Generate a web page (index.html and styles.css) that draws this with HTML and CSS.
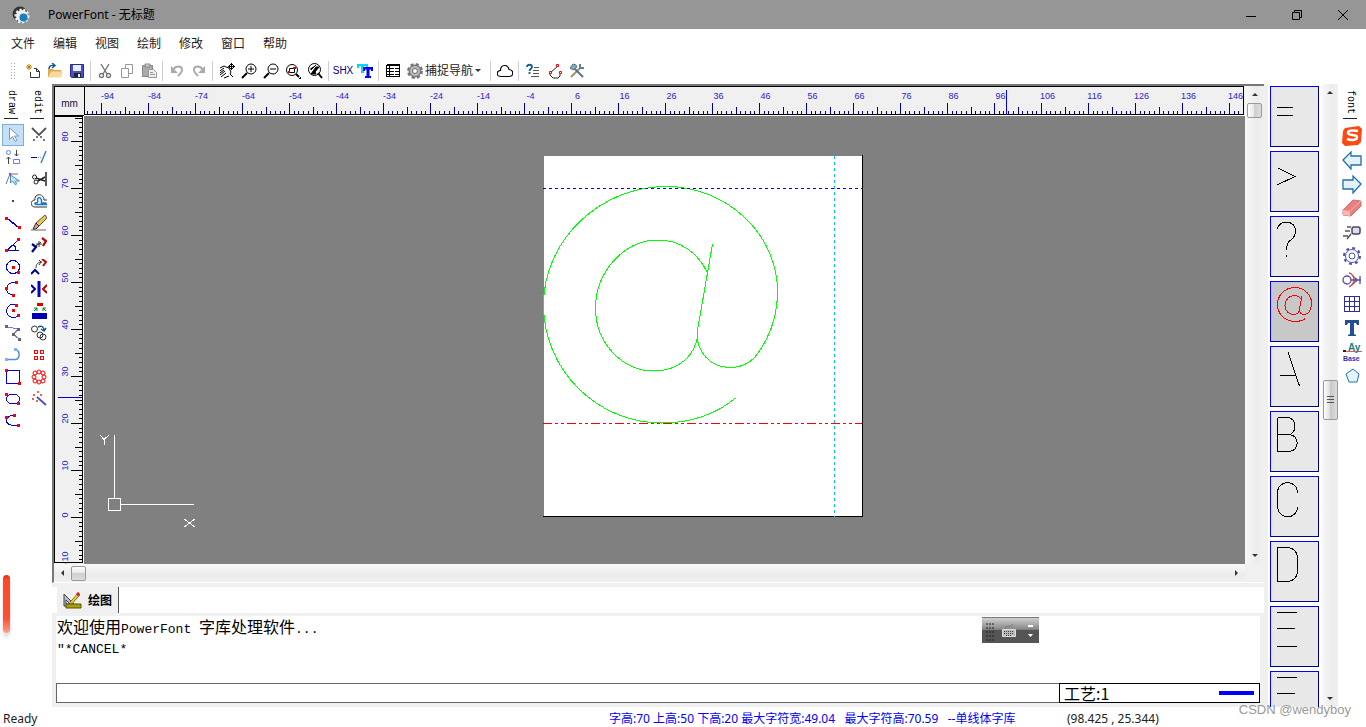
FILE: index.html
```html
<!DOCTYPE html>
<html lang="zh-CN">
<head>
<meta charset="utf-8" />
<title>PowerFont - 无标题</title>
<link rel="stylesheet" href="styles.css">
</head>
<body>
<div class="app">
	<header class="titlebar">
		<svg class="logo" width="18" height="18" viewBox="0 0 18 18"><circle cx="8" cy="8" r="7.500" fill="#333"/><circle cx="10" cy="10" r="6" fill="#eee" stroke="#eee" stroke-width="3" stroke-dasharray="2 1.600"/><circle cx="11.500" cy="11.500" r="4" fill="#1b80b8"/></svg>
		<h1>PowerFont - 无标题</h1>
		<div class="winbtns">
			<button aria-label="最小化"><svg width="12" height="12" viewBox="0 0 12 12"><path d="M1 7.500h10"/></svg></button>
			<button aria-label="还原"><svg width="12" height="12" viewBox="0 0 12 12"><path d="M1.500 3.500h7v7h-7zM3.500 3.500v-2h7v7h-2"/></svg></button>
			<button aria-label="关闭"><svg width="12" height="12" viewBox="0 0 12 12"><path d="M1 1l10 10M11 1L1 11"/></svg></button>
		</div>
	</header>
	<nav class="menu">
		<a href="#">文件</a>
		<a href="#">编辑</a>
		<a href="#">视图</a>
		<a href="#">绘制</a>
		<a href="#">修改</a>
		<a href="#">窗口</a>
		<a href="#">帮助</a>
	</nav>
	<div class="toolbar">
		<span class="grip"></span>
		<button aria-label="新建"><svg viewBox="0 0 16 16"><path d="M4 1v6M1 4h6M2 2l4 4M6 2L2 6" stroke="#c87800"/><path d="M9 5.500h2.500l3 3v6h-9V9" fill="none" stroke="#333"/><path d="M11.500 5.500v3h3" fill="none" stroke="#333"/></svg></button>
		<button aria-label="打开"><svg viewBox="0 0 16 16"><path d="M1 6h5l1 1h7v7H1z" fill="#e0a850"/><path d="M1 14.500l3-6h12l-2 6z" fill="#f8d8a0"/><path d="M2 6c0-3 2-4 5-3.500M5 0l3 2.500L5 5" fill="none" stroke="#0a5a96" stroke-width="1.500"/></svg></button>
		<button aria-label="保存"><svg viewBox="0 0 16 16"><path d="M1.500 1.500h13v13h-12l-1-1z" fill="#4850c8" stroke="#282890"/><path d="M4 2h8v6H4z" fill="#e8f0fa"/><path d="M5 10h7v4H5z" fill="#222"/><path d="M9 11h2v3H9z" fill="#eee"/></svg></button>
		<i class="sep"></i>
		<button aria-label="剪切"><svg viewBox="0 0 16 16" fill="none" stroke="#777" stroke-width="1.400"><path d="M4 1l6 10M12 1L6 11"/><circle cx="4.500" cy="12.500" r="2"/><circle cx="11.500" cy="12.500" r="2"/></svg></button>
		<button aria-label="复制"><svg viewBox="0 0 16 16" fill="#fff" stroke="#999"><path d="M6.500 1.500h7v9h-7z"/><path d="M2.500 5.500h7v9h-7z"/></svg></button>
		<button aria-label="粘贴"><svg viewBox="0 0 16 16"><path d="M1.500 2.500h10v11h-10z" fill="#aaa" stroke="#888"/><path d="M4 1h5v3H4z" fill="#ccc" stroke="#888"/><path d="M7.500 6.500h5l3 3v5h-8z" fill="#eee" stroke="#999"/><path d="M9 9.500h3M9 11.500h5" stroke="#999"/></svg></button>
		<i class="sep"></i>
		<button aria-label="撤销"><svg viewBox="0 0 16 16"><path d="M4 7c2-4 8-5 9-1 .5 3-2 5-4 7" fill="none" stroke="#aaa" stroke-width="2"/><path d="M2 3v7h7z" fill="#aaa"/></svg></button>
		<button aria-label="重做"><svg viewBox="0 0 16 16"><path d="M12 7C10 3 4 2 3 6c-.5 3 2 5 4 7" fill="none" stroke="#aaa" stroke-width="2"/><path d="M14 3v7H7z" fill="#aaa"/></svg></button>
		<i class="sep"></i>
		<button aria-label="平移"><svg viewBox="0 0 16 16" fill="none" stroke="#000"><path d="M1 5l4-2 2 1 3 1 2 4-1 2 3 3M1 8l4-3M1 10l4-3M1 12l5-4M2 14l5-4M5 15l5-2"/><path d="M9 3.500h7M12.500 0v7M11 1.500h3M14.500 2v3M10.500 2v3M11 5.500h3"/></svg></button>
		<button aria-label="放大"><svg viewBox="0 0 16 16" fill="none" stroke="#000"><circle cx="10" cy="6" r="5"/><path d="M7 6h6M10 3v6"/><path d="M6 10l-5 5" stroke-width="2"/></svg></button>
		<button aria-label="缩小"><svg viewBox="0 0 16 16" fill="none" stroke="#000"><circle cx="10" cy="6" r="5"/><path d="M7 6h6"/><path d="M6 10l-5 5" stroke-width="2"/></svg></button>
		<button aria-label="窗口缩放"><svg viewBox="0 0 16 16" fill="none" stroke="#000"><circle cx="7" cy="7" r="5.500"/><path d="M4.500 5.500h5v4h-5z"/><path d="M11 11l3 3" stroke-width="2"/><path d="M3 9h2M8 5h3" stroke="#c00" stroke-width="2"/><path d="M14 16h2v-2z" fill="#000"/></svg></button>
		<button aria-label="上一视图"><svg viewBox="0 0 16 16" fill="none" stroke="#000"><circle cx="7.500" cy="6.500" r="6"/><path d="M9 2L4 7V5M4 11h5l-1-2 4-5H9z" fill="#000"/><path d="M11 10l4 5" stroke-width="2"/></svg></button>
		<i class="sep"></i>
		<button class="shx">SHX</button>
		<button aria-label="字体"><svg viewBox="0 0 16 16"><path d="M0 1h11v4H9V3H7v7H4V3H2v2H0z" fill="#00d8f8"/><path d="M6 4h10v4h-2V6.500h-1.500V13H14v2H8v-2h1.500V6.500H8V8H6z" fill="#0000ff"/></svg></button>
		<i class="sep"></i>
		<button aria-label="列表"><svg viewBox="0 0 16 16" class="px" fill="none" stroke="#000"><path d="M1.500 2.500h13v11h-13zM4.500 2v12M2 5.500h12M2 8.500h12M2 11.500h12M2 1.500h13"/><path d="M9.500 3v10" stroke="#fff"/></svg></button>
		<button class="snap"><svg viewBox="0 0 16 16"><circle cx="8" cy="8" r="6.500" fill="#888" stroke="#777" stroke-width="3" stroke-dasharray="3 2.100"/><circle cx="8" cy="8" r="5.500" fill="#bbb" stroke="#777"/><circle cx="8" cy="8" r="2.500" fill="#fff" stroke="#666"/></svg><span>捕捉导航</span><i class="caret"></i></button>
		<i class="sep"></i>
		<button aria-label="云线"><svg viewBox="0 0 16 16" fill="none" stroke="#000" stroke-width="1.200"><path d="M4 13.500C-1 13.500-1 8 3.500 7.500 3.500 1 11 1 12 6.500c5 .5 5 7 0 7z"/></svg></button>
		<i class="sep"></i>
		<button aria-label="查询"><svg viewBox="0 0 16 16" fill="none"><path d="M2 4c0-3 5-3 5 0 0 2-2.500 1.500-2.500 4M4.500 9v2" stroke="#105a96" stroke-width="1.800"/><path d="M9 4.500h5M8 7.500h6M8 10.500h6M6 13.500h8" stroke="#555"/></svg></button>
		<button aria-label="节点"><svg viewBox="0 0 16 16" fill="#fff"><path d="M11 3L3 10v2l3 3h5l2-2v-2" fill="none" stroke="#222"/><path d="M9.500 1.500h2v2h-2zM2.500 8.500h2v2h-2zM12.500 8.500h2v2h-2z" stroke="#f00"/></svg></button>
		<button aria-label="设置"><svg viewBox="0 0 16 16" fill="none"><path d="M11 5L2 14" stroke="#a89060" stroke-width="2"/><path d="M4 4l10 10" stroke="#55748f" stroke-width="2"/><path d="M1 5l3-4 3 1 1 2-4 3z" fill="#8ba7be" stroke="#55748f"/><path d="M11 1v4h4" stroke="#667f96" stroke-width="2"/></svg></button>
	</div>

	<main class="work">
		<aside class="dock">
			<div class="col">
				<div class="dockname"><span>draw</span></div>
				<button class="on" aria-label="选择"><svg viewBox="0 0 16 16"><path d="M4.500 1v11.500l3-3 2.500 5 2-1-2.500-4.500h4z" fill="#fff" stroke="#6f9ccc"/></svg></button>
				<button aria-label="顺序"><svg viewBox="0 0 16 16" fill="none"><circle cx="3.500" cy="3.500" r="2" stroke="#5a82f0"/><path d="M8.500 10.500h6v4h-6z" stroke="#5a82f0"/><path d="M3.500 15V8M1.500 10l2-2 2 2M11.500 1v6M9.500 5l2 2 2-2" stroke="#444"/></svg></button>
				<button aria-label="节点编辑"><svg viewBox="0 0 16 16"><path d="M1 13L5 3h8" fill="none" stroke="#777"/><path d="M5.500 4v8l2-2 3 4 1-1-1-3h4z" fill="#c8e4f8" stroke="#4890c4"/><path d="M4 2h2v2H4z" fill="#7050e0"/></svg></button>
				<button aria-label="点"><svg viewBox="0 0 16 16"><path d="M7 7h2v2H7z" fill="#444"/></svg></button>
				<button aria-label="直线"><svg viewBox="0 0 16 16" class="px"><path d="M1.500 3l13 10" stroke="#0000e0" stroke-width="1.500"/><path d="M0 2h3v3H0zM13 11h3v3h-3z" fill="#f00"/></svg></button>
				<button aria-label="角度线"><svg viewBox="0 0 16 16" class="px" fill="none" stroke="#0000e0"><path d="M14 2L2 13.500h12M7 8c3 0 4 2 4 5"/><path d="M12 1h3v3h-3zM0 12h3v3H0z" fill="#f00" stroke="none"/></svg></button>
				<button aria-label="圆"><svg viewBox="0 0 16 16" class="px"><circle cx="8" cy="8" r="6.500" fill="none" stroke="#0000e0"/><path d="M7 7h3v3H7zM12 12h3v3h-3z" fill="#f00"/></svg></button>
				<button aria-label="三点弧"><svg viewBox="0 0 16 16" class="px"><path d="M11 1.500C5 1 2 4 1.500 7.500 1 11 4 14 9 14" fill="none" stroke="#0000e0"/><path d="M10 0h3v3h-3zM0 6h3v3H0zM7 13h3v3H7z" fill="#f00"/></svg></button>
				<button aria-label="圆心弧"><svg viewBox="0 0 16 16" class="px"><path d="M11 1.500C5 0 1.500 4 1.500 8c0 5 6 8 11 5.500" fill="none" stroke="#0000e0"/><path d="M10 1h3v3h-3zM7 6h3v3H7zM12 11h3v3h-3z" fill="#f00"/></svg></button>
				<button aria-label="折线"><svg viewBox="0 0 16 16" class="px"><path d="M2 2l12 2-6 5 6 5" fill="none" stroke="#7878e0"/><path d="M0 0h3v3H0zM12 3h3v3h-3zM7 8h3v3H7zM13 13h3v3h-3z" fill="#666"/></svg></button>
				<button aria-label="多段线"><svg viewBox="0 0 16 16"><path d="M1 12.500h9c5 0 6-9 0-10" fill="none" stroke="#5090e0" stroke-width="1.500"/><path d="M0 11h3v3H0zM9 1h3v3H9z" fill="#88b0f0"/></svg></button>
				<button aria-label="矩形"><svg viewBox="0 0 16 16" class="px"><path d="M1.500 1.500h13v13h-13z" fill="#fff" stroke="#0000e0"/><path d="M0 0h3v3H0zM13 13h3v3h-3z" fill="#f00"/></svg></button>
				<button aria-label="椭圆"><svg viewBox="0 0 16 16" class="px"><ellipse cx="8" cy="8" rx="6.500" ry="5" fill="none" stroke="#0000e0"/><path d="M0 2h3v3H0zM12 11h3v3h-3z" fill="#f00"/></svg></button>
				<button aria-label="椭圆弧"><svg viewBox="0 0 16 16" class="px"><path d="M9 2.500C4 2 1.500 5 1.500 8c0 3 4 5 12 4.500" fill="none" stroke="#0000e0"/><path d="M0 3h3v3H0zM8 1h3v3H8zM12 11h3v3h-3z" fill="#f00"/></svg></button>
			</div>
			<div class="col">
				<div class="dockname"><span>edit</span></div>
				<button aria-label="打断"><svg viewBox="0 0 16 16"><path d="M1 1l7 7 7-7" fill="none" stroke="#555" stroke-width="1.800"/><path d="M5 9h2v2H5zM9 9h2v2H9zM2 12h2v2H2zM12 12h2v2h-2z" fill="#777"/></svg></button>
				<button aria-label="延伸"><svg viewBox="0 0 16 16"><path d="M0 8.500h6" stroke="#000090"/><path d="M7 8.500h4" stroke="#999" stroke-dasharray="1 1"/><path d="M10 14l5-12" stroke="#2878c8" stroke-width="1.300"/></svg></button>
				<button aria-label="修剪"><svg viewBox="0 0 16 16" fill="none" stroke="#222"><circle cx="3.500" cy="6" r="2"/><circle cx="5" cy="11" r="2"/><path d="M5 7l9 3M7 10l7-4" stroke-width="1.500"/><path d="M15 1v14" stroke-width="1.500"/></svg></button>
				<button aria-label="偏移"><svg viewBox="0 0 16 16" fill="none"><path d="M4 7c-1-7 9-7 9 0h3M4 7c-5 0-5 7 0 7h12" stroke="#333"/><path d="M7 9c-2-6 4-6 3.500 1h5M7 9.500c-4 0-4 2-1 2h10" stroke="#1878c8" stroke-width="1.500"/></svg></button>
				<button aria-label="擦除"><svg viewBox="0 0 16 16"><path d="M0 15h15" stroke="#666"/><path d="M14 0l2 3-8 8-3-3z" fill="#e8c848" stroke="#555"/><path d="M5 8l3 3-3 3H2z" fill="#d89890" stroke="#333"/></svg></button>
				<button aria-label="移动"><svg viewBox="0 0 16 16" fill="none"><path d="M1 7l4 3-4 5" stroke="#000090" stroke-width="2.200"/><path d="M5 9l5-4M5 7h6M8 4v6" stroke="#333"/><path d="M11 1l4 3-3 5" stroke="#c00000" stroke-width="2.200"/></svg></button>
				<button aria-label="旋转"><svg viewBox="0 0 16 16" fill="none"><path d="M0 15l4-4 4 4" stroke="#000090" stroke-width="2"/><path d="M5 9c0-4 2-6 6-6M8 1l2 2-2 3" stroke="#333"/><path d="M11 0l4 3-3 4" stroke="#c00000" stroke-width="2"/></svg></button>
				<button aria-label="镜像"><svg viewBox="0 0 16 16" fill="none"><path d="M0 4l4 4-4 4" stroke="#000090" stroke-width="2"/><path d="M8 0v16" stroke="#0000c0" stroke-width="3"/><path d="M16 4l-4 4 4 4" stroke="#c00000" stroke-width="2"/></svg></button>
				<button aria-label="缩放"><svg viewBox="0 0 16 16"><path d="M6 0h6v3H6z" fill="#e00000"/><path d="M1 10h15v6H1z" fill="#0000b0"/><path d="M3 8l3-3M3 5h3v3M15 8l-3-3M15 5h-3v3" fill="none" stroke="#008000"/></svg></button>
				<button aria-label="复制对象"><svg viewBox="0 0 16 16" fill="none"><circle cx="3.500" cy="4" r="3" stroke="#333"/><circle cx="9" cy="10" r="3" stroke="#333"/><circle cx="12" cy="12" r="3" stroke="#333"/><path d="M7 2c4-2 6 0 6 4M10 4l3 2 2-3" stroke="#105a96" stroke-width="1.500"/></svg></button>
				<button aria-label="矩形阵列"><svg viewBox="0 0 16 16" class="px" fill="none" stroke="#f00"><path d="M3.500 3.500h3v3h-3zM9.500 3.500h3v3h-3zM3.500 9.500h3v3h-3zM9.500 9.500h3v3h-3z"/></svg></button>
				<button aria-label="环形阵列"><svg viewBox="0 0 16 16" fill="none" stroke="#f00"><circle cx="8" cy="3" r="2"/><circle cx="8" cy="13" r="2"/><circle cx="3" cy="8" r="2"/><circle cx="13" cy="8" r="2"/><circle cx="4" cy="4" r="2"/><circle cx="12" cy="4" r="2"/><circle cx="4" cy="12" r="2"/><circle cx="12" cy="12" r="2"/></svg></button>
				<button aria-label="魔棒"><svg viewBox="0 0 16 16"><path d="M6 6l9 8" stroke="#5050c0" stroke-width="2"/><path d="M2 3h2v2H2zM6 0h2v2H6zM9 3h2v2H9zM1 7h2v2H1zM5 9h2v2H5z" fill="#f06060"/></svg></button>
			</div>
		</aside>

		<div class="center">
			<section class="view">
				<div class="unit">mm</div>
				<svg class="hruler" id="hruler"></svg>
				<div class="vscroll">
					<button aria-label="上"><i class="up"></i></button>
					<b class="thumb"></b>
					<button class="last" aria-label="下"><i class="down"></i></button>
				</div>
				<svg class="vruler" id="vruler"></svg>
				<div class="canvas">
					<svg width="100%" height="100%" class="px" fill="none">
						<!-- glyph sheet -->
						<rect x="460" y="40" width="318" height="360" fill="#fff"/>
						<path d="M459 400.500h320M778.500 39v362" stroke="#000"/>
						<path d="M459 307.500h319" stroke="#f00" stroke-dasharray="9 3 3 3 3 3"/>
						<path transform="translate(459 70)" stroke="#0f0" d="M192.500 212C172 229 147 237 118.500 237C54 237 .5 184 .5 119C.5 54 57 .5 123 .5C185 .5 234.500 49 234.500 105.500C234.500 128 227 150 215 167C208 177 198 181.500 187 181.500C166 181.500 154 165 154 147L169.500 58M164 86C154 66 137 54 115 54C81 54 52.500 86 52.500 122C52.500 157 79 185 111 185C135 185 153 170 155 147"/>
						<path d="M459 72.500h319" stroke="#0000e0" stroke-dasharray="3 3"/>
						<path d="M750.500 40v361" stroke="#00bfff" stroke-dasharray="3 3"/>
						<!-- ucs icon -->
						<path d="M30.500 319v63M36 388.500h74M24.500 382.500h12v12h-12zM16 319l4 4.500 5-4.500M20.500 324v5M100 403l11 8M111 403l-11 8" stroke="#fff"/>
					</svg>
				</div>
				<div class="hscroll">
					<button aria-label="左"><i class="left"></i></button>
					<b class="thumb"></b>
					<button class="last" aria-label="右"><i class="right"></i></button>
				</div>
			</section>
			<div class="tabs">
				<button class="tab"><svg width="20" height="18" viewBox="0 0 20 18"><path d="M2 2v12h12z" fill="#b8b8c8" stroke="#444"/><path d="M4 8v4h4z" fill="#fff" stroke="#444"/><path d="M17 2L9 11" stroke="#333" stroke-width="3"/><path d="M16 3L9 11" stroke="#f0d000" stroke-width="2"/><path d="M15 1l2 2" stroke="#d02020" stroke-width="3"/><path d="M4 12h15v4H4z" fill="#a8a010" stroke="#555500"/></svg>绘图</button>
			</div>
			<div class="output">
				<p>欢迎使用<tt>PowerFont </tt>字库处理软件<tt>...</tt></p>
				<p><tt>″*CANCEL*</tt></p>
				<div class="ime">
					<svg width="57" height="26" viewBox="0 0 57 26"><path d="M4 6h8M4 10h8M4 14h8M4 18h8M4 22h8" stroke="#222" stroke-dasharray="2 1"/><path d="M20.500 11.500h13v7h-13z" fill="#bbb" stroke="#ddd"/><path d="M22 13.500h10M22 15.500h10M24 17.500h6" stroke="#444" stroke-dasharray="1 1"/><path d="M23 10c0-3 7 0 8-4" fill="none" stroke="#777"/><path d="M46 7h5v2h-5zM46 16h5l-2.500 3z" fill="#fff"/></svg>
				</div>
			</div>
			<div class="command">
				<input type="text" aria-label="命令" />
				<div class="craft"><span>工艺:1</span><i></i></div>
			</div>
		</div>

		<div class="glyphs">
			<button aria-label="="><svg viewBox="0 0 47 59"><path d="M6 20.500h16M6 28.500h16"/></svg></button>
			<button aria-label="&gt;"><svg viewBox="0 0 47 59"><path d="M7 16l17 8.500L6 33"/></svg></button>
			<button aria-label="?"><svg viewBox="0 0 47 59"><path d="M6.500 12C7 3 24.500 2 24.500 14C24.500 25 15.500 20 15.500 33M15.500 38v2"/></svg></button>
			<button class="on" aria-label="@"><svg viewBox="0 0 47 59"><path stroke="#f00" d="M34.500 36.500C31 39 28 39.500 24 39.500C14 39.500 6.500 32 6.500 22.500C6.500 13 14 5.500 24 5.500C33 5.500 40.500 13 40.500 21C40.500 28 37 32.500 33.500 32.500C30 32.500 28.500 30 28.500 27L31 14M30.500 18C29 15 27 13.500 23 13.500C18 13.500 14 18 14 23.500C14 29 18 32.500 22 32.500C26 32.500 28.500 30 28.500 27"/></svg></button>
			<button aria-label="A"><svg viewBox="0 0 47 59"><path d="M17 5l11.500 34M9 28.500h16"/></svg></button>
			<button aria-label="B"><svg viewBox="0 0 47 59"><path d="M6.500 5.500H17C26 6 26 22 18 22.500H6.500M18 22.500C29 23 29 39 18 39.500H6.500v-34"/></svg></button>
			<button aria-label="C"><svg viewBox="0 0 47 59"><path d="M26.500 16C26.500 2 6.500 2 6.500 16V29C6.500 43 26.500 43 26.500 30"/></svg></button>
			<button aria-label="D"><svg viewBox="0 0 47 59"><path d="M6.500 5.500H16C22 5.500 26.500 10 26.500 16V29C26.500 35 22 39.500 16 39.500H6.500z"/></svg></button>
			<button aria-label="E"><svg viewBox="0 0 47 59"><path d="M6 5.500h20M6 21.500h18M6 39.500h20"/></svg></button>
			<button aria-label="F"><svg viewBox="0 0 47 59"><path d="M6 5.500h20M6 21.500h18"/></svg></button>
		</div>
		<div class="vscroll glyphscroll">
			<button aria-label="上"><i class="up"></i></button>
			<b class="thumb"></b>
			<button class="last" aria-label="下"><i class="down"></i></button>
		</div>

		<aside class="dock fontdock">
			<div class="col">
				<div class="dockname"><span>font</span></div>
				<button aria-label="输入法"><svg viewBox="0 0 20 20"><path d="M3 2l14-2 3 3-1 13-3 3-13 1-3-3L1 5z" fill="#fa4a14"/><path d="M16 5c-5-1-10-1-10 2s9 1 9 4-5 4-10 2" fill="none" stroke="#fff" stroke-width="2.500"/></svg></button>
				<button aria-label="上一字"><svg viewBox="0 0 20 20"><path d="M1 10l8-8v4h10v9H9v4z" fill="#e4f2fc" stroke="#2070b0" stroke-width="1.300"/></svg></button>
				<button aria-label="下一字"><svg viewBox="0 0 20 20"><path d="M19 10l-8-8v4H1v9h10v4z" fill="#e4f2fc" stroke="#2070b0" stroke-width="1.300"/></svg></button>
				<button aria-label="删除"><svg viewBox="0 0 20 20"><path d="M1 12L11 2l8 1v5L9 18l-8-1z" fill="#e88080" stroke="#d07070"/><path d="M1 12l7 1v5l-7-1z" fill="#f8b8b0"/><path d="M8 13L19 3" stroke="#f8b0b0"/></svg></button>
				<button aria-label="查找"><svg viewBox="0 0 20 20" fill="none" stroke="#555"><path d="M5 5h4M3 9h5M1 14h5M9 12l-4 5" stroke-width="1.500"/><rect x="10" y="5" width="8" height="7" rx="2" fill="#dde" stroke="#446" stroke-width="1.500"/></svg></button>
				<button aria-label="设置"><svg viewBox="0 0 20 20" fill="none" stroke="#5050a8"><circle cx="10" cy="10" r="8" stroke-width="2" stroke-dasharray="3 3.280"/><circle cx="10" cy="10" r="6.500" fill="#fff"/><circle cx="10" cy="10" r="3"/></svg></button>
				<button aria-label="连接"><svg viewBox="0 0 20 20" fill="none" stroke-width="1.300"><path d="M7 3c3 0 5 4 5 7s-3 6-5 7M10 5l5 5M10 15l5-5" stroke="#c05050"/><circle cx="5" cy="10" r="4" stroke="#5050a8"/><path d="M9 10h10M18 6v8M14 8v4" stroke="#5050a8"/></svg></button>
				<button aria-label="网格"><svg viewBox="0 0 20 20" class="px" fill="none" stroke="#2c2ca0"><path d="M2.500 2.500h15v15h-15zM7.500 2v16M12.500 2v16M2 7.500h16M2 12.500h16"/></svg></button>
				<button aria-label="文字"><svg viewBox="0 0 20 20"><path d="M3 2h14v5h-2l-1-2h-2v11l2 1v1H6v-1l2-1V5H6L5 7H3z" fill="#205090"/></svg></button>
				<button aria-label="基线"><svg viewBox="0 0 20 20"><path d="M1 8h3v2H1z" fill="#222"/><path d="M4 9.500h16" stroke="#d06060"/><text x="6" y="9" class="ay">Ay</text><text x="1" y="19" class="base">Base</text></svg></button>
				<button aria-label="多边形"><svg viewBox="0 0 20 20"><path d="M11 3l6 5-2 8H7L4 8z" fill="#e4f4fc" stroke="#2070b0"/></svg></button>
			</div>
		</aside>
	</main>

	<footer class="status">
		<span>Ready</span>
		<span class="info">字高:70 上高:50 下高:20 最大字符宽:49.04&nbsp;&nbsp; 最大字符高:70.59&nbsp;&nbsp; --单线体字库</span>
		<span>(98.425 , 25.344)</span>
	</footer>
	<div class="redbar"></div>
	<div class="watermark">CSDN @wendyboy</div>
</div>
<script src="ruler.js"></script>
</body>
</html>
```

FILE: styles.css
```css
* {box-sizing: border-box}
body {margin: 0; font: 12px/16px "Noto Sans", "Noto Sans CJK SC", sans-serif; color: #222; background: #fff}
button {margin: 0; padding: 0; border: 0; background: none; font: inherit; color: inherit; display: flex; align-items: center; justify-content: center; flex: none}
a {color: #222; text-decoration: none}
a:hover {color: #0000ff}
p {margin: 0}
.px {shape-rendering: crispEdges}
.app {position: relative; display: flex; flex-direction: column; height: 100vh; overflow: hidden}

/* title, menu */
.titlebar {display: flex; align-items: center; flex: none; height: 29px; padding-left: 12px; background: #969696; color: #000}
.titlebar h1 {flex: 1; margin: 0; padding-left: 18px; font-size: 12px; font-weight: normal}
.winbtns {display: flex}
.winbtns button {width: 46px; height: 29px}
.winbtns svg {fill: none; stroke: #000}
.menu {display: flex; align-items: center; flex: none; gap: 18px; height: 28px; padding: 2px 0 0 11px}

/* toolbar */
.toolbar {display: flex; align-items: center; flex: none; height: 27px; padding-left: 10px}
.toolbar button {width: 22px; height: 22px}
.toolbar svg {width: 16px; height: 16px; flex: none}
.grip {width: 6px; height: 18px; margin-right: 6px; background: radial-gradient(#aaa 1px, transparent 1px) 0 0/3px 3px}
.sep {width: 1px; height: 20px; margin: 0 3px 0 2px; background: #ccccdc}
.toolbar .shx {font: 10px "Liberation Sans", sans-serif; color: #000080}
.toolbar .snap {width: 84px; justify-content: flex-start; padding-left: 3px; gap: 2px}
.caret {border: 3px solid transparent; border-top-color: #333; border-bottom: 0}

/* docks */
.work {display: flex; flex: 1; min-height: 0}
.dock {display: flex; flex: none; width: 52px}
.col {display: flex; flex-direction: column; width: 26px; padding-left: 2px}
.dockname {height: 40px; width: 22px; padding-top: 6px}
.dockname span {display: flex; align-items: center; height: 29px; width: 14px; margin-left: 2px; border-bottom: 1px solid #222; writing-mode: vertical-rl; font: 10px/14px "Liberation Mono", monospace; color: #000}
.dock button {width: 22px; height: 22px}
.dock svg {width: 16px; height: 16px; flex: none}
.dock .on {background: #c6dff5; border: 1px solid #7aaede}
.fontdock {width: 28px}
.fontdock .col {width: 28px; padding-left: 3px}
.fontdock button {height: 24px}
.fontdock svg {width: 20px; height: 20px}
.ay {font: bold 10px "Liberation Sans", sans-serif; fill: #208080}
.base {font: bold 7px "Liberation Sans", sans-serif; fill: #3030b0}

/* drawing view */
.center {display: flex; flex-direction: column; flex: 1; min-width: 0; background: #f0f0f0}
.view {display: grid; grid-template-columns: 30px 1fr 19px; grid-template-rows: 30px 1fr 18px; flex: 1; min-height: 0; border-top: 2px solid #777; border-left: 2px solid #777; border-bottom: 1px solid #fff; background: #f0f0f0}
.unit {border: 1px solid #000; border-right: 0; font: 10px/34px "Liberation Sans", sans-serif; text-align: center; color: #101040}
.hruler, .vruler {display: block; width: 100%; height: 100%; min-height: 0; overflow: hidden; font: 9px "Liberation Sans", sans-serif; fill: #3020c8; shape-rendering: crispEdges}
.vruler {grid-row: 2; grid-column: 1}
.canvas {grid-row: 2; grid-column: 2; min-height: 0; background: #808080; overflow: hidden}
.canvas svg {display: block}
.vscroll {grid-row: 1 / 3; grid-column: 3; display: flex; flex-direction: column; align-items: center; background: linear-gradient(90deg, #f8f8f8, #ececec 60%, #f0f0f0)}
.hscroll {grid-row: 3; grid-column: 1 / 3; display: flex; align-items: center; background: linear-gradient(#f8f8f8, #ececec 60%, #f0f0f0)}
.vscroll button, .hscroll button {width: 17px; height: 17px}
.last {margin-top: auto}
.hscroll .last {margin: 0 0 0 auto}
.thumb {width: 15px; height: 15px; border: 1px solid #999; border-radius: 2px; background: linear-gradient(90deg, #fff, #e8e8e8 45%, #d0d0d4 50%, #ddd)}
.hscroll .thumb {background: linear-gradient(#fff, #e8e8e8 45%, #d0d0d4 50%, #ddd)}
.up, .down, .left, .right {border: 3px solid transparent}
.up {border-bottom: 3px solid #333; border-top: 0}
.down {border-top: 3px solid #333; border-bottom: 0}
.left {border-right: 3px solid #333; border-left: 0}
.right {border-left: 3px solid #333; border-right: 0}

/* command panel */
.tabs {display: flex; flex: none; height: 26px; margin-top: 4px; padding-left: 5px; background: #fff}
.tab {gap: 6px; height: 26px; padding: 2px 6px 0 5px; background: #f0f0f0; border-right: 1px solid #555; font-weight: bold; color: #000}
.output {position: relative; flex: none; height: 67px; margin: 3px 4px 0 4px; background: #fff; font: 16px/20px "Noto Sans CJK SC", sans-serif; color: #000}
.output p {height: 20px; padding-left: 1px}
.output tt {font: 13px/16px "Liberation Mono", monospace; white-space: pre}
.ime {position: absolute; right: 221px; top: 1px; height: 26px; border-top: 1px solid #777; background: linear-gradient(#d0d0d0, #888 45%, #555 50%, #555)}
.ime svg {display: block}
.command {display: flex; flex: none; height: 20px; margin: 0 4px 4px 4px}
.command input {flex: 1; min-width: 0; border: 1px solid #666; border-right: 0; background: #fff}
.craft {display: flex; align-items: center; justify-content: space-between; width: 201px; padding: 0 5px 0 4px; border: 1px solid #000; background: #fff; font: 16px/18px "Noto Sans CJK SC", sans-serif; color: #000}
.craft i {width: 35px; height: 4px; background: #0000ff}

/* glyph list */
.glyphs {display: flex; flex-direction: column; flex: none; gap: 4px; width: 58px; padding: 2px 0 0 2px; border-left: 4px solid #f0f0f0; overflow: hidden}
.glyphs button {width: 49px; height: 61px; border: 1px solid #0000ff; border-right-color: #000080; border-bottom-color: #000080; background: #e8e8e8}
.glyphs .on {background: #c8c8c8}
.glyphs svg {width: 47px; height: 59px; fill: none; stroke: #000; shape-rendering: crispEdges}
.glyphscroll {width: 16px}
.glyphscroll .thumb {height: 40px; margin-top: 279px; background: repeating-linear-gradient(#555 0 1px, transparent 1px 3px) 50% 50%/7px 9px no-repeat, linear-gradient(90deg, #fff, #ddd 45%, #c8c8cc 50%, #ddd)}

/* status */
.status {display: grid; grid-template-columns: 1fr 458px 299px; flex: none; height: 20px; padding-left: 3px; line-height: 24px; white-space: nowrap}
.info {color: #0000ff}
.redbar {position: absolute; left: 3px; top: 575px; width: 7px; height: 58px; border-radius: 4px; background: linear-gradient(#d83018, #ff4828 8%, #ff5030 75%, #ffa090); box-shadow: 0 4px 4px #ddd}
.watermark {position: absolute; right: 15px; bottom: 7px; font: 13px/20px "Liberation Sans", sans-serif; color: #999}
```

FILE: ruler.js
```js
var STEP = 4.7; // pixels per mm

function tick(k) {
	return k % 10 == 0 ? 11 : (k % 5 == 0 ? 7 : 3);
}

function drawTop() {
	var svg = document.getElementById("hruler");
	var w = svg.clientWidth, d = "", s = "";
	for (var k = -3; 17 + k * STEP < w - 2; k++) {
		var x = Math.round(17 + k * STEP) + 0.5;
		d += "M" + x + " 28v-" + tick(k);
		if (k % 10 == 0) {
			s += '<text x="' + (x + 6) + '" y="13" text-anchor="middle">' + (k - 94) + '</text>';
		}
	}
	svg.innerHTML = '<path d="' + d + '" stroke="#0000a0"/>' + s +
		'<path d="M0 .5H' + (w - 1.5) + 'V28.500H.5V0" fill="none" stroke="#000"/>' +
		'<path d="M922.500 4v25" stroke="#0000ff"/><path d="M0 29.500h' + w + '" stroke="#fff"/>';
}

function drawLeft() {
	var svg = document.getElementById("vruler");
	var h = svg.clientHeight, d = "", s = "";
	for (var k = -5; 25 + k * STEP < h + 4; k++) {
		var y = Math.round(25 + k * STEP) + 0.5;
		d += "M28 " + y + "h-" + tick(k);
		if (k % 10 == 0) {
			s += '<text transform="translate(14 ' + y + ') rotate(-90)">' + (80 - k) + '</text>';
		}
	}
	svg.innerHTML = '<path d="' + d + '" stroke="#000"/>' + s +
		'<path d="M.5 0V' + (h - 1.5) + 'H28.500V.5H0" fill="none" stroke="#000"/>' +
		'<path d="M4 281.500h24" stroke="#0000c0"/><path d="M29.500 0v' + h + '" stroke="#fff"/>';
}

function draw() {
	drawTop();
	drawLeft();
}

window.onresize = draw;
draw();
```
